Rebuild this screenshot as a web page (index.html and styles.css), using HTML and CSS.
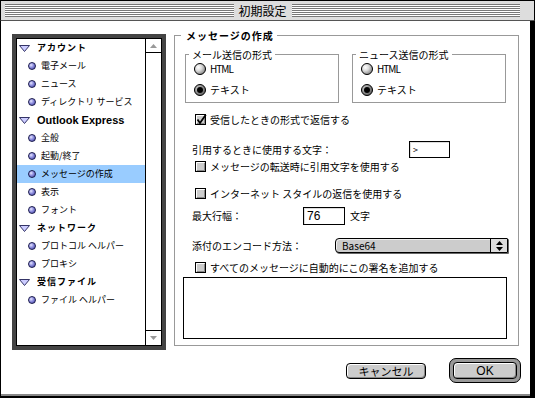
FILE: index.html
```html
<!DOCTYPE html>
<html lang="ja">
<head>
<meta charset="utf-8">
<title>初期設定</title>
<link rel="stylesheet" href="styles.css">
</head>
<body>
<div class="window">
  <div class="titlebar">
    <div class="stripes"></div>
    <div class="title">初期設定</div>
    <div class="stripes"></div>
  </div>
  <div class="body">
    <div class="main">
      <div class="list-frame">
        <div class="list">
          <ul class="tree">
            <li class="head"><svg class="tri" width="11" height="7" viewBox="0 0 11 7"><polygon points="0.5,0.5 10.5,0.5 5.5,6.5" fill="#ccccff" stroke="#333366"/></svg><span>アカウント</span></li>
            <li class="item"><span class="dot"></span><span>電子メール</span></li>
            <li class="item"><span class="dot"></span><span>ニュース</span></li>
            <li class="item"><span class="dot"></span><span>ディレクトリ サービス</span></li>
            <li class="head"><svg class="tri" width="11" height="7" viewBox="0 0 11 7"><polygon points="0.5,0.5 10.5,0.5 5.5,6.5" fill="#ccccff" stroke="#333366"/></svg><span class="latin">Outlook Express</span></li>
            <li class="item"><span class="dot"></span><span>全般</span></li>
            <li class="item"><span class="dot"></span><span>起動/終了</span></li>
            <li class="item selected"><span class="dot"></span><span>メッセージの作成</span></li>
            <li class="item"><span class="dot"></span><span>表示</span></li>
            <li class="item"><span class="dot"></span><span>フォント</span></li>
            <li class="head"><svg class="tri" width="11" height="7" viewBox="0 0 11 7"><polygon points="0.5,0.5 10.5,0.5 5.5,6.5" fill="#ccccff" stroke="#333366"/></svg><span>ネットワーク</span></li>
            <li class="item"><span class="dot"></span><span>プロトコル ヘルパー</span></li>
            <li class="item"><span class="dot"></span><span>プロキシ</span></li>
            <li class="head"><svg class="tri" width="11" height="7" viewBox="0 0 11 7"><polygon points="0.5,0.5 10.5,0.5 5.5,6.5" fill="#ccccff" stroke="#333366"/></svg><span>受信ファイル</span></li>
            <li class="item"><span class="dot"></span><span>ファイル ヘルパー</span></li>
          </ul>
          <div class="scrollbar">
            <div class="sb-arrow sb-up"><svg width="7" height="4" viewBox="0 0 7 4"><polygon points="3.5,0 7,4 0,4" fill="#999"/></svg></div>
            <div class="sb-track"></div>
            <div class="sb-arrow sb-down"><svg width="7" height="4" viewBox="0 0 7 4"><polygon points="0,0 7,0 3.5,4" fill="#999"/></svg></div>
          </div>
        </div>
      </div>

      <fieldset class="group">
        <legend class="gtitle">メッセージの作成</legend>
        <div class="gbody">
          <div class="subgroups">
            <fieldset class="sub">
              <legend class="stitle">メール送信の形式</legend>
              <div class="radio">
                <svg width="12" height="12" viewBox="0 0 12 12"><defs><radialGradient id="ru1" cx="0.35" cy="0.35" r="0.75"><stop offset="0" stop-color="#ffffff"/><stop offset="0.4" stop-color="#dddddd"/><stop offset="1" stop-color="#777777"/></radialGradient></defs><circle cx="6" cy="6" r="5.5" fill="url(#ru1)" stroke="#000"/></svg>
                <span class="latin-s">HTML</span>
              </div>
              <div class="radio">
                <svg width="12" height="12" viewBox="0 0 12 12"><defs><radialGradient id="rc1" cx="0.35" cy="0.35" r="0.75"><stop offset="0" stop-color="#cccccc"/><stop offset="1" stop-color="#555555"/></radialGradient></defs><circle cx="6" cy="6" r="5.5" fill="url(#rc1)" stroke="#000"/><circle cx="6" cy="6" r="3" fill="#000"/></svg>
                <span>テキスト</span>
              </div>
            </fieldset>
            <fieldset class="sub">
              <legend class="stitle">ニュース送信の形式</legend>
              <div class="radio">
                <svg width="12" height="12" viewBox="0 0 12 12"><defs><radialGradient id="ru2" cx="0.35" cy="0.35" r="0.75"><stop offset="0" stop-color="#ffffff"/><stop offset="0.4" stop-color="#dddddd"/><stop offset="1" stop-color="#777777"/></radialGradient></defs><circle cx="6" cy="6" r="5.5" fill="url(#ru2)" stroke="#000"/></svg>
                <span class="latin-s">HTML</span>
              </div>
              <div class="radio">
                <svg width="12" height="12" viewBox="0 0 12 12"><defs><radialGradient id="rc2" cx="0.35" cy="0.35" r="0.75"><stop offset="0" stop-color="#cccccc"/><stop offset="1" stop-color="#555555"/></radialGradient></defs><circle cx="6" cy="6" r="5.5" fill="url(#rc2)" stroke="#000"/><circle cx="6" cy="6" r="3" fill="#000"/></svg>
                <span>テキスト</span>
              </div>
            </fieldset>
          </div>

          <div class="check check-reply">
            <svg class="cb" width="12" height="12" viewBox="0 0 12 12"><rect x="0.5" y="0.5" width="10" height="10" fill="#cccccc" stroke="#000"/><path d="M1.5 9.5V1.5H9.5" stroke="#fff" fill="none"/><path d="M2 9.5H9.5V2" stroke="#888" fill="none"/><path d="M2.5 5.5L5 9L10.8 0.8" stroke="#000" stroke-width="1.8" fill="none"/></svg>
            <span>受信したときの形式で返信する</span>
          </div>

          <div class="field-row row-quote">
            <span class="label label-quote">引用するときに使用する文字：</span>
            <span class="input input-quote">&gt;</span>
          </div>

          <div class="check check-forward">
            <svg class="cb" width="12" height="12" viewBox="0 0 12 12"><rect x="0.5" y="0.5" width="10" height="10" fill="#cccccc" stroke="#000"/><path d="M1.5 9.5V1.5H9.5" stroke="#fff" fill="none"/><path d="M2 9.5H9.5V2" stroke="#888" fill="none"/></svg>
            <span>メッセージの転送時に引用文字を使用する</span>
          </div>

          <div class="check check-inet">
            <svg class="cb" width="12" height="12" viewBox="0 0 12 12"><rect x="0.5" y="0.5" width="10" height="10" fill="#cccccc" stroke="#000"/><path d="M1.5 9.5V1.5H9.5" stroke="#fff" fill="none"/><path d="M2 9.5H9.5V2" stroke="#888" fill="none"/></svg>
            <span>インターネット スタイルの返信を使用する</span>
          </div>

          <div class="field-row row-max">
            <span class="label label-max">最大行幅：</span>
            <span class="input input-max">76</span>
            <span class="unit">文字</span>
          </div>

          <div class="field-row row-encode">
            <span class="label label-encode">添付のエンコード方法：</span>
            <div class="popup">
              <span class="popup-value">Base64</span>
              <span class="popup-arrows"><svg width="7" height="10" viewBox="0 0 7 10"><polygon points="3.5,0 7,4 0,4" fill="#000"/><polygon points="0,6 7,6 3.5,10" fill="#000"/></svg></span>
            </div>
          </div>

          <div class="check check-sig">
            <svg class="cb" width="12" height="12" viewBox="0 0 12 12"><rect x="0.5" y="0.5" width="10" height="10" fill="#cccccc" stroke="#000"/><path d="M1.5 9.5V1.5H9.5" stroke="#fff" fill="none"/><path d="M2 9.5H9.5V2" stroke="#888" fill="none"/></svg>
            <span>すべてのメッセージに自動的にこの署名を追加する</span>
          </div>

          <div class="sig"></div>
        </div>
      </fieldset>
    </div>

    <div class="buttons">
      <div class="btn btn-cancel">キャンセル</div>
      <div class="ring"><div class="btn btn-ok">OK</div></div>
    </div>
  </div>
</div>
</body>
</html>
```

FILE: styles.css
```css
* { box-sizing: border-box; }

html, body {
  margin: 0;
  padding: 0;
  background: #ffffff;
}

body {
  font-family: "Noto Sans CJK JP", "Noto Sans", sans-serif;
  font-size: 10px;
  color: #000;
}

.window {
  width: 535px;
  height: 398px;
  display: flex;
  flex-direction: column;
}

/* ---------- title bar ---------- */
.titlebar {
  height: 21px;
  flex: none;
  display: flex;
  align-items: center;
  background: #dddddd;
  border: 1px solid #000;
  border-bottom-color: #555;
  padding: 0 14px 0 4px;
}

.stripes {
  flex: 1;
  height: 13px;
  background: repeating-linear-gradient(to bottom, #777777 0 1px, #ffffff 1px 2px);
}

.title {
  padding: 0 5px;
  font-size: 12px;
  line-height: 14px;
}

/* ---------- window body ---------- */
.body {
  flex: 1;
  display: flex;
  flex-direction: column;
  border-left: 1px solid #000;
  border-right: 5px solid #000;
  border-bottom: 2px solid #000;
  box-shadow: inset 0 -2px 0 #888;
}

.main {
  display: flex;
  align-items: flex-start;
  padding: 8px 0 0 11px;
}

/* ---------- list ---------- */
.list-frame {
  flex: none;
  margin-top: 5px;
  border: 4px solid #444;
}

.list {
  display: flex;
  width: 146px;
  height: 308px;
  border: 1px solid #000;
}

.tree {
  list-style: none;
  margin: 0;
  padding: 0;
  width: 128px;
}

.tree li {
  height: 18px;
  display: flex;
  align-items: center;
  white-space: nowrap;
  line-height: 12px;
}

.head {
  padding-left: 2px;
  gap: 7px;
  font-size: 9px;
  font-weight: bold;
  letter-spacing: 1px;
}

.item {
  padding-left: 11px;
  gap: 5px;
  font-size: 9px;
}

.item.selected {
  background: #99ccff;
}

.latin {
  font-family: "Liberation Sans", sans-serif;
  font-size: 11px;
  letter-spacing: 0;
}

.tri {
  flex: none;
  display: block;
}

.dot {
  flex: none;
  width: 8px;
  height: 8px;
  border-radius: 50%;
  border: 1px solid #1a1a4d;
  background: radial-gradient(circle at 35% 35%, #e6e6ff 0, #8c8cdd 45%, #3c3c99 100%);
}

.scrollbar {
  width: 16px;
  border-left: 1px solid #000;
  display: flex;
  flex-direction: column;
}

.sb-arrow {
  display: flex;
  align-items: center;
  justify-content: center;
}

.sb-arrow svg { display: block; }

.sb-up {
  height: 14px;
  border-bottom: 1px solid #000;
}

.sb-track { flex: 1; }

.sb-down {
  height: 15px;
  border-top: 1px solid #000;
}

/* ---------- group ---------- */
.group {
  margin: 0 0 0 8px;
  padding: 6px 0 6px 0;
  border: 1px solid #999;
  width: 345px;
  min-inline-size: 0;
}

.gtitle {
  margin-left: 6px;
  padding: 0 3px 0 5px;
  font-size: 10px;
  font-weight: bold;
  letter-spacing: 1px;
  line-height: 13px;
}

.gbody {
  display: flex;
  flex-direction: column;
  align-items: flex-start;
  padding-left: 8px;
}

.subgroups {
  display: flex;
  gap: 13px;
  margin-left: 2px;
}

.sub {
  margin: 0;
  padding: 0 0 4px 0;
  border: 1px solid #999;
  width: 154px;
  min-inline-size: 0;
}

.stitle {
  margin-left: 3px;
  padding: 0 3px;
  font-size: 10px;
  line-height: 13px;
}

.radio {
  display: flex;
  align-items: center;
  gap: 4px;
  height: 16px;
  margin-left: 8px;
  line-height: 12px;
}

.radio + .radio { margin-top: 5px; }

.radio svg { display: block; flex: none; }

.latin-s { letter-spacing: -1px; }

.check {
  display: flex;
  align-items: center;
  gap: 3px;
  height: 16px;
  margin-left: 12px;
  line-height: 12px;
  white-space: nowrap;
}

.cb { display: block; flex: none; overflow: visible; }

.check-reply { margin-top: 9px; }
.check-forward { margin-top: 1px; }
.check-inet { margin-top: 11px; }
.check-sig { margin-top: 7px; }

.field-row {
  display: flex;
  align-items: center;
  margin-left: 9px;
  line-height: 12px;
  white-space: nowrap;
}

.row-quote { margin-top: 13px; }
.row-max { margin-top: 5px; }
.row-encode { margin-top: 13px; }

.label-quote { width: 217px; }
.label-max { width: 111px; }
.label-encode { width: 143px; }

.input {
  display: flex;
  align-items: center;
  border: 1px solid #000;
  background: #fff;
  box-shadow: inset 1px 1px 0 #ddd;
}

.input-quote {
  width: 41px;
  height: 17px;
  padding-left: 3px;
  font-size: 9px;
}

.input-max {
  width: 42px;
  height: 18px;
  padding-left: 3px;
  font-family: "Liberation Sans", sans-serif;
  font-size: 12px;
}

.unit { margin-left: 5px; }

.popup {
  display: flex;
  width: 173px;
  height: 15px;
  border: 1px solid #000;
  border-radius: 4px 1px 1px 4px;
  background: #cccccc;
  box-shadow: 1px 1px 0 #666, inset 1px 1px 0 #eee;
}

.popup-value {
  flex: 1;
  padding-left: 6px;
  line-height: 13px;
}

.popup-arrows {
  width: 17px;
  display: flex;
  align-items: center;
  justify-content: center;
  border-left: 1px solid #000;
  background: #dddddd;
}

.popup-arrows svg { display: block; }

.sig {
  margin-top: 1px;
  width: 324px;
  height: 62px;
  border: 1px solid #000;
  background: #fff;
}

/* ---------- buttons ---------- */
.buttons {
  display: flex;
  justify-content: flex-end;
  align-items: center;
  gap: 23px;
  margin-top: 8px;
  padding-right: 9px;
}

.btn {
  display: flex;
  align-items: center;
  justify-content: center;
  border: 1px solid #000;
  border-radius: 4px;
  background: #cccccc;
  box-shadow: inset 1px 1px 0 #fff, inset -1px -1px 0 #888;
}

.btn-cancel {
  width: 80px;
  height: 16px;
  font-size: 11px;
  line-height: 12px;
}

.ring {
  padding: 3px;
  border: 1px solid #000;
  border-radius: 7px;
  background: #999999;
}

.btn-ok {
  width: 64px;
  height: 17px;
  font-family: "Liberation Sans", sans-serif;
  font-size: 12px;
  line-height: 14px;
}
```
